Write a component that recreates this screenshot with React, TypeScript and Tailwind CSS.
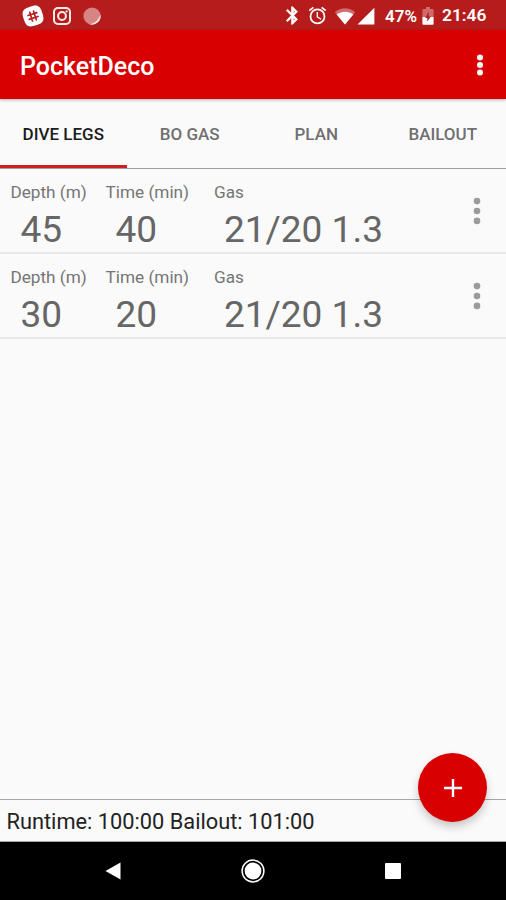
import type { ReactNode } from "react";

function Icon({ className, children }: { className: string; children: ReactNode }) {
  return (
    <svg viewBox="0 0 24 24" fill="currentColor" className={`block shrink-0 ${className}`}>
      {children}
    </svg>
  );
}

function StatusBar() {
  return (
    <div className="flex h-[30px] shrink-0 items-center bg-[#b71c1c] pt-px pl-[22px] text-white">
      <svg viewBox="0 0 22 22" className="size-[22px] shrink-0">
        <g transform="rotate(-18 11 11)">
          <path d="M11 1.2C18.8 1.2 20.8 3.2 20.8 11S18.8 20.8 11 20.8 1.2 18.8 1.2 11 3.2 1.2 11 1.2Z" fill="#fff" />
          <path d="M9 6.4v9.2M13 6.4v9.2M6.4 9h9.2M6.4 13h9.2" stroke="#b71c1c" strokeWidth="1.7" strokeLinecap="round" />
        </g>
      </svg>
      <svg viewBox="0 0 20 20" className="ml-2 size-5 shrink-0" fill="none" stroke="#ffeaea" strokeWidth="2">
        <rect x="2" y="2" width="16" height="16" rx="4" />
        <circle cx="10" cy="10" r="3.9" />
        <circle cx="14.6" cy="5.4" r="1.1" fill="#ffeaea" stroke="none" />
      </svg>
      <svg viewBox="0 0 20 20" className="ml-[10px] size-5 shrink-0">
        <circle cx="10" cy="10" r="8.6" fill="#d68484" />
        <path d="M18.4 8.4A8.6 8.6 0 0 1 7 18.1C12.5 17.8 16.5 14 18.4 8.4Z" fill="#fbe6e6" />
      </svg>
      <Icon className="ml-[180px] h-[21px] w-[21px]">
        <path stroke="currentColor" strokeWidth=".9" d="M17.71 7.71L12 2h-1v7.59L6.41 5 5 6.41 10.59 12 5 17.59 6.41 19 11 14.41V22h1l5.71-5.71-4.3-4.29 4.3-4.29zM13 5.83l1.88 1.88L13 9.59V5.83zm1.88 10.46L13 18.17v-3.76l1.88 1.88z" />
      </Icon>
      <Icon className="ml-[4px] size-[21px]">
        <path d="M22 5.72l-4.6-3.86-1.29 1.53 4.6 3.86L22 5.72zM7.88 3.39L6.6 1.86 2 5.71l1.29 1.53 4.59-3.85zM12.5 8H11v6l4.75 2.85.75-1.23-4-2.37V8zM12 4a9 9 0 1 0 0 18 9 9 0 0 0 0-18zm0 16a7 7 0 1 1 0-14 7 7 0 0 1 0 14z" />
      </Icon>
      <svg viewBox="0 0 22 18" className="ml-[6px] h-[18px] w-[22px] shrink-0">
        <path d="M.8 5.2C6.8-.1 15.2-.1 21.2 5.2L11 17.4Z" fill="#d06c6c" />
        <path d="M2.7 7.4C7.7 3.8 14.3 3.8 19.3 7.4L11 17.4Z" fill="#fff" />
      </svg>
      <svg viewBox="0 0 18 18" className="ml-px h-[18px] w-[18px] shrink-0">
        <path d="M.5 17.5 17.4.7V17.5Z" fill="#fff" />
      </svg>
      <span className="mt-px ml-[10px] w-8 whitespace-nowrap text-[17px] leading-none font-semibold">47%</span>
      <svg viewBox="0 0 12 18" className="ml-[5px] h-[18px] w-3 shrink-0">
        <path d="M4 0h4v2h2.500q1.100 0 1.100 1.100V10H.4V3.100Q.4 2 1.500 2H4Z" fill="#cf6a6a" />
        <path d="M.4 10h11.200v6.800q0 1-1 1H1.400q-1 0-1-1Z" fill="#fff" />
        <path d="M6.700 4.500 3.200 11h2.100V14.500L8.800 9.500H6.700Z" fill="#b71c1c" />
      </svg>
      <span className="mt-px ml-[8px] whitespace-nowrap text-[17.400px] leading-none font-semibold">21:46</span>
    </div>
  );
}

function Tab({ label, active = false }: { label: string; active?: boolean }) {
  return (
    <div className={`flex flex-1 flex-col text-center text-[17px] font-medium ${active ? "text-[#1c1c1c]" : "text-[#707070]"}`}>
      <span className="pt-[23px] leading-6 whitespace-nowrap">{label}</span>
      {active && <div className="mt-auto h-[3px] w-full bg-[#cc2020]" />}
    </div>
  );
}

function Field({ label, value, className }: { label: string; value: string; className: string }) {
  return (
    <div className={`pt-[12px] whitespace-nowrap ${className}`}>
      <div className="text-[17.200px] leading-[22px] text-[#757575]">{label}</div>
      <div className="mt-[6px] pl-[10px] text-[37px] leading-[42px] text-[#666666]">{value}</div>
    </div>
  );
}

function LegRow({ depth, time, gas }: { depth: string; time: string; gas: string }) {
  return (
    <div className="flex h-[85px] shrink-0 border-b-2 border-[#e8e8e8] pl-[10.400px]">
      <Field label="Depth (m)" value={depth} className="w-[95.200px]" />
      <Field label="Time (min)" value={time} className="w-[108.400px]" />
      <Field label="Gas" value={gas} className="flex-1" />
      <svg viewBox="0 0 8 28" className="mt-[28px] mr-[25px] h-7 w-2" fill="#9b9b9b">
        <circle cx="4" cy="4.100" r="3.300" />
        <circle cx="4" cy="14" r="3.300" />
        <circle cx="4" cy="23.900" r="3.300" />
      </svg>
    </div>
  );
}

export default function App() {
  return (
    <div className="relative flex h-[900px] w-[506px] flex-col overflow-hidden bg-[#fafafa] font-['Roboto',sans-serif]">
      <StatusBar />
      <header className="flex h-[69px] shrink-0 items-center justify-between bg-[#d80000] pr-[22px] pl-5 text-white shadow-[0_1px_3px_rgba(0,0,0,0.3)]">
        <h1 className="pt-[3px] text-[25px] leading-none font-medium">PocketDeco</h1>
        <svg viewBox="0 0 8 24" className="h-6 w-2" fill="#fff">
          <circle cx="4" cy="4.600" r="3" />
          <circle cx="4" cy="12" r="3" />
          <circle cx="4" cy="19.400" r="3" />
        </svg>
      </header>
      <nav className="flex h-[70px] shrink-0 border-b border-[#a0a0a0]">
        <Tab label="DIVE LEGS" active />
        <Tab label="BO GAS" />
        <Tab label="PLAN" />
        <Tab label="BAILOUT" />
      </nav>
      <main className="flex flex-1 flex-col">
        <LegRow depth="45" time="40" gas="21/20 1.3" />
        <LegRow depth="30" time="20" gas="21/20 1.3" />
      </main>
      <footer className="flex h-[43px] shrink-0 items-center border-y border-[#a6a6a6] pt-[2px] pl-[6.500px] text-[21.800px] leading-none whitespace-nowrap text-[#222222]">
        Runtime: 100:00 Bailout: 101:00
      </footer>
      <div className="flex h-[58px] shrink-0 items-center justify-between bg-black px-[105px]">
        <svg viewBox="0 0 16 18" className="h-[18px] w-4" fill="#fff">
          <path d="M.5 9 15.500.5v17Z" />
        </svg>
        <svg viewBox="0 0 24 24" className="size-6">
          <circle cx="12" cy="12" r="10.900" fill="none" stroke="#fff" strokeWidth="1.500" />
          <circle cx="12" cy="12" r="8.400" fill="#fff" />
        </svg>
        <div className="size-4 rounded-[1px] bg-white" />
      </div>
      <button className="absolute top-[753px] left-[418px] flex size-[69px] items-center justify-center rounded-full bg-[#d80000] shadow-[0_5px_8px_rgba(0,0,0,0.2)]">
        <svg viewBox="0 0 18 18" className="size-[18px]" stroke="#fff" strokeWidth="2.400">
          <path d="M9 0v18M0 9h18" />
        </svg>
      </button>
    </div>
  );
}
